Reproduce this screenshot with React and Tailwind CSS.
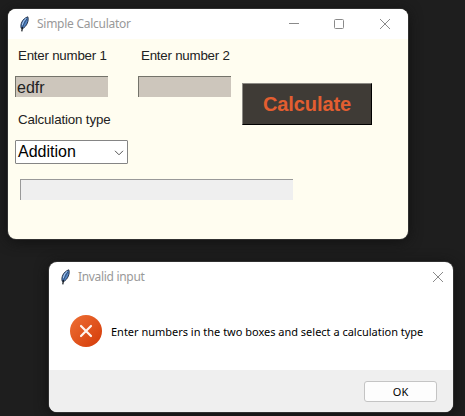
function Feather() {
  return (
    <svg className="h-4 w-[11px] shrink-0" viewBox="0 0 11 16">
      <path d="M2.2 12.2C1 8.5 3.2 2.8 8.8.8C10.2 4.2 7.8 10.5 3.6 12.6Z" fill="#5485c4" stroke="#17243a" strokeWidth="0.9" />
      <path d="M3.4 9.2C3.9 6 5.2 3.8 7.2 2.4" fill="none" stroke="#b4d0f0" strokeWidth="1" />
      <path d="M8 2.8C5.8 6 4.2 9.2 3.2 12.2" fill="none" stroke="#1b3358" strokeWidth="0.7" />
      <path d="M3.4 11.2L2.8 15.4" fill="none" stroke="#0b1017" strokeWidth="1.2" />
    </svg>
  );
}

function CloseIcon() {
  return (
    <svg className="h-[10px] w-[10px]" viewBox="0 0 10 10" fill="none" stroke="#8a8a8a" strokeWidth="1">
      <path d="M0 0L10 10M10 0L0 10" />
    </svg>
  );
}

function Field({ label, value }) {
  return (
    <div className="w-[93px]">
      <div className="pl-[3px] text-[13.33px] leading-4 tracking-[-0.23px] whitespace-nowrap text-[#222222]">{label}</div>
      <div className="mt-[12px] h-[21px] border-t border-l border-[#74736a] bg-[#cdc6bc] pl-px text-[16px] leading-[21px] text-[#222222]">
        {value}
      </div>
    </div>
  );
}

function CalculatorWindow() {
  return (
    <section className="absolute top-[9px] left-[8px] h-[230px] w-[400px] overflow-hidden rounded-lg bg-[#fffdf0] shadow-[0_0_0_1px_#303030,0_2px_14px_#101010]">
      <header className="flex h-[30px] items-center bg-white pl-[11px]">
        <Feather />
        <span className="ml-[7px] font-['Noto_Sans',sans-serif] text-[12px] tracking-[-0.26px] text-[#999999]">Simple Calculator</span>
        <svg className="mr-[35px] ml-auto h-[10px] w-[10px]" viewBox="0 0 10 10">
          <path d="M0 4.5H10" stroke="#8a8a8a" />
        </svg>
        <svg className="mr-[36px] h-[10px] w-[10px]" viewBox="0 0 10 10">
          <rect x=".5" y=".5" width="9" height="9" rx="1" fill="none" stroke="#8a8a8a" />
        </svg>
        <span className="mr-[18px]">
          <CloseIcon />
        </span>
      </header>
      <div className="flex items-start pt-[9px] pl-[7px]">
        <Field label="Enter number 1" value="edfr" />
        <div className="ml-[30px]">
          <Field label="Enter number 2" value="" />
        </div>
        <button className="mt-[35px] ml-[11px] h-[42px] w-[130px] border-t border-r border-b border-l border-t-[#8d8b85] border-r-black border-b-black border-l-[#8d8b85] bg-[#3f3b36] text-[20px] font-bold tracking-[-0.1px] text-[#e35e30]">
          Calculate
        </button>
      </div>
      <div className="-mt-[13px] ml-[10px] text-[13.33px] leading-4 tracking-[-0.15px] text-[#222222]">Calculation type</div>
      <div className="mt-[12px] ml-[7px] flex h-[24px] w-[113px] items-center justify-between rounded-[1px] border border-[#858585] bg-white pr-[3px] pl-[2px] text-[16px] text-black">
        Addition
        <svg className="mt-px h-[6px] w-[10px]" viewBox="0 0 10 6">
          <path d="M1 .8L5 4.8L9 .8" fill="none" stroke="#555555" />
        </svg>
      </div>
      <div className="mt-[15px] ml-[12px] h-[21px] w-[273px] border-t border-l border-[#999999] bg-[#efefef]" />
    </section>
  );
}

function ErrorDialog() {
  return (
    <section className="absolute top-[262px] left-[49px] h-[150px] w-[404px] overflow-hidden rounded-lg bg-white font-['Noto_Sans',sans-serif] shadow-[0_0_0_1px_#303030,0_2px_14px_#101010]">
      <header className="flex h-[29px] items-center pl-[11px]">
        <Feather />
        <span className="ml-[7px] text-[12px] tracking-[-0.32px] text-[#999999]">Invalid input</span>
        <span className="mr-[10px] ml-auto">
          <CloseIcon />
        </span>
      </header>
      <div className="flex h-[79px] items-center pl-[21px]">
        <svg className="h-8 w-8 shrink-0" viewBox="0 0 32 32">
          <defs>
            <linearGradient id="err" x1="0" y1="0" x2="1" y2="1">
              <stop offset="0" stopColor="#ee7035" />
              <stop offset="1" stopColor="#d43a08" />
            </linearGradient>
          </defs>
          <circle cx="16" cy="16" r="16" fill="url(#err)" />
          <path d="M11 11L21 21M21 11L11 21" stroke="#fff5ef" strokeWidth="2.2" strokeLinecap="round" />
        </svg>
        <p className="ml-[9px] pt-[3px] text-[11px] tracking-[-0.01px] whitespace-nowrap text-black">
          Enter numbers in the two boxes and select a calculation type
        </p>
      </div>
      <footer className="flex h-[42px] justify-end bg-[#efefef] pt-[11px] pr-[16px]">
        <button className="h-[21px] w-[73px] rounded-[3px] border border-[#c4c4c4] bg-[#fdfdfd] text-[11px] leading-none text-black">OK</button>
      </footer>
    </section>
  );
}

export default function App() {
  return (
    <main className="relative h-[416px] w-[465px] overflow-hidden bg-[#1e1e1e] font-['Liberation_Sans',Arial,sans-serif]">
      <CalculatorWindow />
      <ErrorDialog />
    </main>
  );
}
